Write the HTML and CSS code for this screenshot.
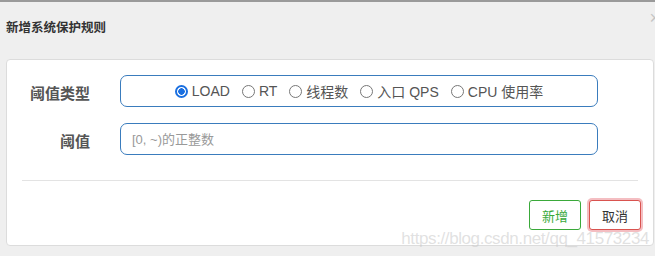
FILE: index.html
```html
<!DOCTYPE html>
<html lang="zh-CN">
<head>
    <meta charset="UTF-8">
    <meta name="viewport" content="width=device-width, initial-scale=1.0">
    <title>新增系统保护规则</title>
    <link rel="stylesheet" href="styles.css">
</head>
<body>

    <div class="modal">
        <div class="modal-header">
            <h4>新增系统保护规则</h4>
            <span class="close">&times;</span>
        </div>

        <div class="modal-body">
            <div class="form-row">
                <label class="form-label">阈值类型</label>
                <div class="radio-box">
                    <label class="radio"><input type="radio" name="grade" checked> LOAD</label>
                    <label class="radio"><input type="radio" name="grade"> RT</label>
                    <label class="radio"><input type="radio" name="grade"> 线程数</label>
                    <label class="radio"><input type="radio" name="grade"> 入口 QPS</label>
                    <label class="radio"><input type="radio" name="grade"> CPU 使用率</label>
                </div>
            </div>
            <div class="form-row">
                <label class="form-label">阈值</label>
                <input class="text-input" type="text" placeholder="[0, ~)的正整数">
            </div>

            <hr class="divider">

            <!-- 底部按钮 -->
            <div class="modal-footer">
                <button class="btn btn-add">新增</button>
                <button class="btn btn-cancel">取消</button>
            </div>
        </div>

        <div class="watermark">https://blog.csdn.net/qq_41573234</div>
    </div>

</body>
</html>
```

FILE: styles.css
```css
body {
    margin: 0;
    font-family: "Liberation Sans", "Noto Sans CJK SC", sans-serif;
    background-color: #efefef;
    width: 655px;
    height: 256px;
    overflow: hidden;
}
.modal {
    position: relative;
    height: 256px;
    border-top: 2px solid #9a9a9a;
    box-sizing: border-box;
}
.modal-header {
    position: relative;
    height: 57px;
    display: flex;
    align-items: center;
    padding-left: 6px;
}
.modal-header h4 {
    margin: 0;
    margin-top: -8px;
    font-size: 12.5px;
    font-weight: bold;
    color: #333;
}
.close {
    position: absolute;
    right: -5px;
    top: 6px;
    font-size: 18px;
    color: #c4c4c4;
}

/* tarjeta blanca */
.modal-body {
    background: #fff;
    margin: 0 1px 0 6px;
    border: 1px solid #dcdcdc;
    border-radius: 4px;
    height: 187px;
    box-sizing: border-box;
    padding-top: 15px;
}
.form-row {
    display: grid;
    grid-template-columns: 83px 478px;
    column-gap: 30px;
    align-items: center;
    margin-bottom: 16px;
}
.form-label {
    text-align: right;
    font-size: 15px;
    font-weight: bold;
    color: #555;
    padding-top: 3px;
}
.radio-box {
    height: 32px;
    box-sizing: border-box;
    border: 1px solid #3a7cbd;
    border-radius: 7px;
    display: flex;
    justify-content: center;
    align-items: center;
    gap: 12px;
    font-size: 14px;
    color: #555;
}
.radio {
    display: flex;
    align-items: center;
    gap: 4px;
}
.radio input {
    appearance: none;
    width: 13px;
    height: 13px;
    margin: 0;
    border: 1px solid #777;
    border-radius: 50%;
    box-sizing: border-box;
}
.radio input:checked {
    border: 2px solid #1a6fe0;
    background: radial-gradient(circle, #1a6fe0 0 3px, #fff 3.5px);
}
.text-input {
    height: 32px;
    box-sizing: border-box;
    border: 1px solid #3a7cbd;
    border-radius: 7px;
    padding: 0 11px;
    font-family: inherit;
    font-size: 13px;
    outline: none;
}
.text-input::placeholder { color: #999; }
.divider {
    border: none;
    border-top: 1px solid #e3e3e3;
    margin: 25px 15px 0 15px;
}
.modal-footer {
    display: flex;
    justify-content: flex-end;
    gap: 8px;
    padding: 19px 12px 0 0;
}
.btn {
    height: 30px;
    padding: 0 12px;
    background: #fff;
    border-radius: 3px;
    font-family: inherit;
    font-size: 13px;
}
.btn-add {
    border: 1px solid #3aa93a;
    color: #3aa93a;
}
.btn-cancel {
    border: 1px solid #d9534f;
    color: #333;
    box-shadow: 0 0 0 2px rgba(230, 110, 120, 0.45);
}
.watermark {
    position: absolute;
    right: 6px;
    bottom: 7px;
    font-size: 17px;
    letter-spacing: -0.4px;
    color: rgba(200, 200, 200, 0.55);
}
```
